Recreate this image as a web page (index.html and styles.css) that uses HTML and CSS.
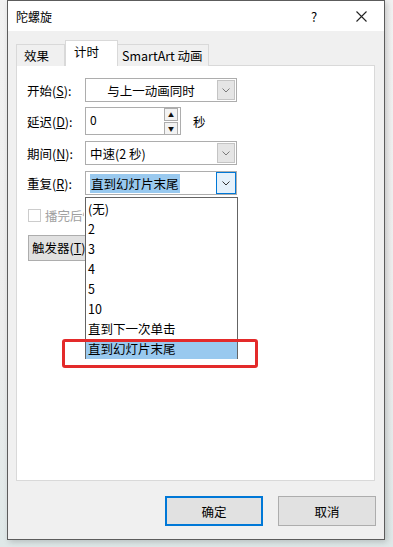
FILE: index.html
```html
<!DOCTYPE html>
<html lang="zh-CN">
<head>
  <meta charset="UTF-8" />
  <meta name="viewport" content="width=device-width, initial-scale=1.0" />
  <title>陀螺旋</title>
  <link rel="stylesheet" href="styles.css">
</head>
<body>
  <div class="dialog">
    <div class="titlebar">
      <span class="title">陀螺旋</span>
      <span class="help">?</span>
      <span class="close">
        <svg width="11" height="11" viewBox="0 0 11 11"><path d="M0.5 0.5 L10.5 10.5 M10.5 0.5 L0.5 10.5" stroke="#222" stroke-width="1.1" fill="none"/></svg>
      </span>
    </div>

    <div class="tabs">
      <div class="tab">效果</div>
      <div class="tab active">计时</div>
      <div class="tab">SmartArt 动画</div>
    </div>

    <div class="panel">
      <div class="row r-start">
        <label class="lbl">开始(<u>S</u>):</label>
        <div class="select">
          <span class="value center">与上一动画同时</span>
          <span class="arrow"><svg width="8" height="5" viewBox="0 0 8 5"><path d="M0.5 0.5 L4 4 L7.5 0.5" stroke="#7a7a7a" fill="none"/></svg></span>
        </div>
      </div>

      <div class="row r-delay">
        <label class="lbl">延迟(<u>D</u>):</label>
        <div class="spin">
          <span class="value">0</span>
          <span class="spin-btns">
            <span class="spin-btn">&#9650;</span>
            <span class="spin-btn">&#9660;</span>
          </span>
        </div>
        <span class="unit">秒</span>
      </div>

      <div class="row r-period">
        <label class="lbl">期间(<u>N</u>):</label>
        <div class="select">
          <span class="value">中速(2 秒)</span>
          <span class="arrow"><svg width="8" height="5" viewBox="0 0 8 5"><path d="M0.5 0.5 L4 4 L7.5 0.5" stroke="#7a7a7a" fill="none"/></svg></span>
        </div>
      </div>

      <div class="row r-repeat">
        <label class="lbl">重复(<u>R</u>):</label>
        <div class="select focus">
          <span class="value"><span class="hl">直到幻灯片末尾</span></span>
          <span class="arrow"><svg width="8" height="5" viewBox="0 0 8 5"><path d="M0.5 0.5 L4 4 L7.5 0.5" stroke="#333" fill="none"/></svg></span>
        </div>
      </div>

      <div class="check-row">
        <span class="checkbox"></span>
        <span class="check-text">播完后快退</span>
      </div>

      <div class="trigger">触发器(<u>T</u>)</div>
    </div>

    <div class="footer">
      <button class="btn primary">确定</button>
      <button class="btn">取消</button>
    </div>

    <ul class="dropdown">
      <li>(无)</li>
      <li>2</li>
      <li>3</li>
      <li>4</li>
      <li>5</li>
      <li>10</li>
      <li>直到下一次单击</li>
      <li class="selected">直到幻灯片末尾</li>
    </ul>
    <div class="mark"></div>
  </div>
</body>
</html>
```

FILE: styles.css
```css
body, html {
  margin: 0;
  padding: 0;
  height: 100%;
  overflow: hidden;
}

body {
  background: linear-gradient(to bottom, #f2f2f2 0%, #ededed 60%, #dfe8e8 100%);
  font-family: "Noto Sans CJK SC", "Noto Sans", sans-serif;
  font-size: 12px;
  color: #000;
}

.dialog {
  position: relative;
  margin-left: 7px;
  width: 376px;
  height: 538px;
  border: 1px solid #5c5c5c;
  background: #f0f0f0;
  box-shadow: 2px 2px 6px rgba(0, 0, 0, 0.18);
}

/* title bar */
.titlebar {
  height: 30px;
  background: #fff;
  display: flex;
  align-items: center;
  padding-left: 8px;
}

.title {
  flex: 1;
  font-size: 12px;
}

.help {
  width: 14px;
  font-size: 13px;
  margin-right: 31px;
}

.close {
  display: flex;
  margin-right: 17px;
}

/* tabs */
.tabs {
  display: flex;
  align-items: flex-end;
  padding: 10px 8px 0;
  height: 25px;
  margin-bottom: -1px;
  position: relative;
  z-index: 1;
}

.tab {
  height: 21px;
  line-height: 21px;
  padding: 0 7px;
  border: 1px solid #d9d9d9;
  border-bottom: none;
  background: #f0f0f0;
  font-size: 12.5px;
}

.tab + .tab {
  border-left: none;
}

.tab:first-child {
  width: 33px;
}

.tab.active {
  height: 25px;
  line-height: 21px;
  width: 36px;
  background: #fff;
  border-left: 1px solid #d9d9d9;
  border-right: 1px solid #d9d9d9;
  padding: 0 7px 0 8px;
}

.tab.active + .tab {
  border-left: none;
  padding: 0 5px 0 4px;
}

/* panel */
.panel {
  margin-left: 8px;
  width: 359px;
  height: 416px;
  box-sizing: border-box;
  border: 1px solid #d9d9d9;
  background: #fff;
  padding: 12px 0 0 10px;
}

.row {
  display: flex;
  align-items: center;
}

.lbl {
  width: 58px;
  font-size: 12.5px;
}

.r-start { margin-bottom: 5px; }
.r-delay { margin-bottom: 6px; }
.r-period { margin-bottom: 6px; }

.select {
  width: 152px;
  height: 24px;
  box-sizing: border-box;
  border: 1px solid #adadad;
  display: flex;
  align-items: stretch;
  background: #fff;
}

.select .value {
  flex: 1;
  display: flex;
  align-items: center;
  padding-left: 4px;
  font-size: 12.5px;
}

.select .value.center {
  justify-content: center;
  padding-left: 0;
}

.arrow {
  width: 16px;
  margin: 1px;
  border: 1px solid #c4c4c4;
  background: #e5e5e5;
  display: flex;
  align-items: center;
  justify-content: center;
}

.select.focus .arrow {
  border: 1px solid #0078d7;
  background: #e5f1fb;
  margin: 0;
  width: 18px;
}

.hl {
  background: #99c9ef;
  padding: 0 1px;
}

/* spin box */
.spin {
  width: 96px;
  height: 28px;
  box-sizing: border-box;
  border: 1px solid #adadad;
  display: flex;
  background: #fff;
}

.spin .value {
  flex: 1;
  padding: 3px 0 0 4px;
}

.spin-btns {
  display: flex;
  flex-direction: column;
  justify-content: center;
  gap: 1px;
  padding: 1px 2px 1px 0;
}

.spin-btn {
  width: 12px;
  height: 11px;
  border: 1px solid #adadad;
  background: #f3f3f3;
  font-size: 6px;
  line-height: 11px;
  text-align: center;
  color: #111;
}

.unit {
  margin-left: 12px;
  font-size: 12.5px;
}

/* checkbox and trigger (partly hidden under the open list) */
.check-row {
  display: flex;
  align-items: center;
  width: 56px;
  overflow: hidden;
  white-space: nowrap;
  margin-top: 11px;
  margin-left: 1px;
}

.checkbox {
  flex: none;
  width: 11px;
  height: 11px;
  border: 1px solid #cccccc;
  background: #fff;
}

.check-text {
  margin-left: 4px;
  color: #a0a0a0;
  font-size: 12.5px;
}

.trigger {
  margin-top: 10px;
  margin-left: 1px;
  width: 80px;
  height: 26px;
  box-sizing: border-box;
  border: 1px solid #adadad;
  background: #e1e1e1;
  line-height: 24px;
  padding-left: 3px;
  font-size: 12.5px;
}

/* footer */
.footer {
  display: flex;
  justify-content: flex-end;
  gap: 15px;
  padding: 15px 8px 0 0;
}

.btn {
  width: 98px;
  height: 30px;
  border: 1px solid #adadad;
  background: #e1e1e1;
  font-family: inherit;
  font-size: 12.5px;
  color: #000;
  padding: 0;
}

.btn.primary {
  border: 2px solid #0078d7;
}

/* open dropdown list */
.dropdown {
  position: absolute;
  left: 77px;
  top: 196px;
  width: 153px;
  height: 162px;
  box-sizing: border-box;
  margin: 0;
  padding: 1px 0 0;
  list-style: none;
  border: 1px solid #646464;
  background: #fff;
  z-index: 2;
}

.dropdown li {
  height: 20px;
  line-height: 20px;
  padding-left: 2px;
  font-size: 12.5px;
}

.dropdown li.selected {
  background: #99c9ef;
}

/* red annotation box */
.mark {
  position: absolute;
  left: 54px;
  top: 338px;
  width: 190px;
  height: 23px;
  border: 3px solid #e32a2a;
  border-radius: 3px;
  z-index: 3;
}
```
